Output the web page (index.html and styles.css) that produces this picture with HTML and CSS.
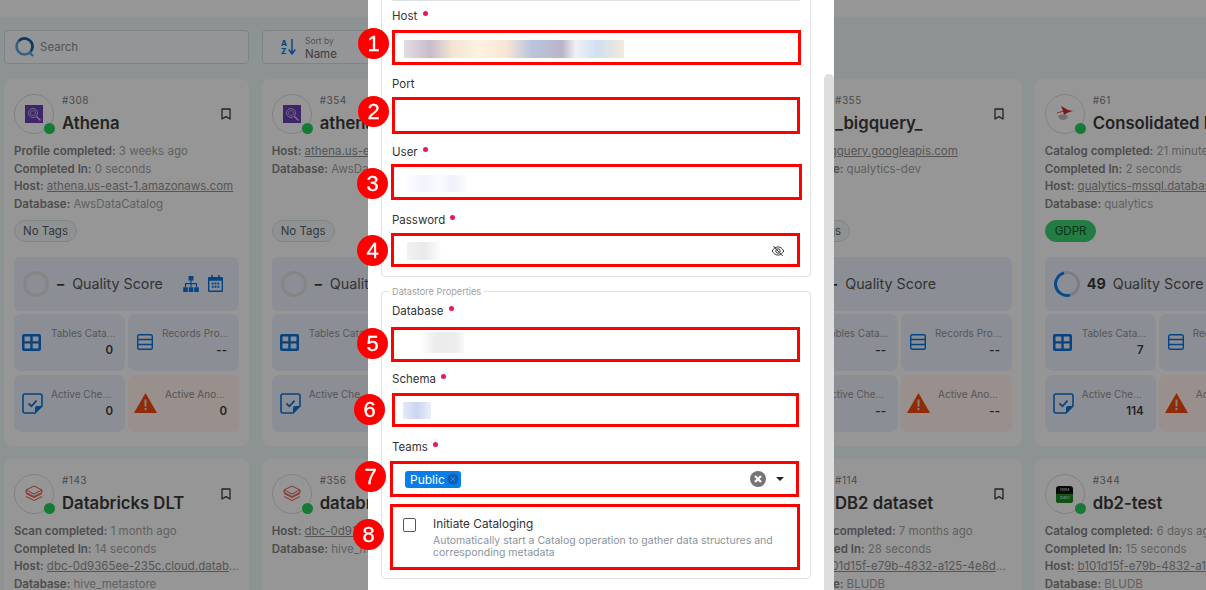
FILE: index.html
```html
<!DOCTYPE html>
<html lang="en">
<head>
    <meta charset="UTF-8">
    <meta name="viewport" content="width=device-width, initial-scale=1.0">
    <title>Add Datastore</title>
    <link rel="stylesheet" href="styles.css">
</head>
<body>
    <svg class="sprites" width="0" height="0">
        <symbol id="i-bookmark" viewBox="0 0 10 12"><path d="M1 1h8v10L5 8.6 1 11z" fill="none" stroke="currentColor" stroke-width="1.3" stroke-linejoin="round"/></symbol>
        <symbol id="i-tree" viewBox="0 0 16 16"><path d="M5.500 0h5v4.500h-5zM.2 11.200h4.600V16H.2zM5.700 11.200h4.600V16H5.700zM11.200 11.200h4.600V16h-4.600z" fill="currentColor"/><path d="M8 4v7M2.500 11V7.600h11V11" fill="none" stroke="currentColor" stroke-width="1.2"/></symbol>
        <symbol id="i-calendar" viewBox="0 0 16 18"><path d="M3.500 0h1.600v2h5.800V0h1.600v2H15a1 1 0 0 1 1 1v14a1 1 0 0 1-1 1H1a1 1 0 0 1-1-1V3a1 1 0 0 1 1-1h2.500zM1.500 6v10.500h13V6z" fill="currentColor" fill-rule="evenodd"/><path d="M4 8h2v2H4zM7 8h2v2H7zM10 8h2v2h-2zM4 11.500h2v2H4zM7 11.500h2v2H7zM10 11.500h2v2h-2z" fill="currentColor"/></symbol>
        <symbol id="i-table" viewBox="0 0 19 17"><path d="M2 0h15a2 2 0 0 1 2 2v13a2 2 0 0 1-2 2H2a2 2 0 0 1-2-2V2a2 2 0 0 1 2-2zm.5 2.500v4.700h5.800V2.500zm8.200 0v4.700h5.800V2.500zm-8.200 7v5h5.800v-5zm8.200 0v5h5.800v-5z" fill="currentColor" fill-rule="evenodd"/></symbol>
        <symbol id="i-rows" viewBox="0 0 16 16"><rect x=".7" y=".7" width="14.600" height="14.600" rx="1.500" fill="none" stroke="currentColor" stroke-width="1.400"/><path d="M1 5.500h14M1 10.500h14" stroke="currentColor" stroke-width="1.400"/></symbol>
        <symbol id="i-check" viewBox="0 0 21 21"><path d="M13 20H3a2 2 0 0 1-2-2V3a2 2 0 0 1 2-2h15a2 2 0 0 1 2 2v10z" fill="none" stroke="currentColor" stroke-width="1.600" stroke-linejoin="round"/><path d="M13 20v-5a2 2 0 0 1 2-2h5z" fill="currentColor"/><path d="M6.500 10.500l3 2.800 5-5.600" fill="none" stroke="currentColor" stroke-width="1.800"/></symbol>
        <symbol id="i-warn" viewBox="0 0 23 20"><path d="M11.500 0L23 20H0z" fill="currentColor"/><path d="M10.500 6.500h2v7h-2zM10.500 15h2v2.200h-2z" fill="#e6d5d0"/></symbol>
        <symbol id="i-athena" viewBox="0 0 18 18"><rect width="18" height="18" fill="#6a3fb0"/><circle cx="8" cy="8" r="4.500" fill="none" stroke="#d9cdf0" stroke-width=".8"/><circle cx="8" cy="8" r="2.500" fill="none" stroke="#d9cdf0" stroke-width=".6"/><path d="M11.500 11.500l4 4" stroke="#d9cdf0" stroke-width="1.200"/></symbol>
        <symbol id="i-bricks" viewBox="0 0 18 18"><path d="M9 1l8 4-8 4-8-4zM1 8.500l8 4 8-4M1 11.500l8 4 8-4M1 5v2.500l8 4 8-4V5" fill="none" stroke="#e2503e" stroke-width="1"/></symbol>
        <symbol id="i-sql" viewBox="0 0 18 18"><path d="M5 1l7 4 5 1-5 1.500L8 10 7 6z" fill="#d8262c"/><path d="M2 11c3-2 7-2 10 0-1 3-3 4-5 4s-4-1-5-4z" fill="#b9b9b9"/><path d="M1 8l7-2" stroke="#d8262c" stroke-width=".8"/></symbol>
    </svg>

    <div class="topbar"></div>
    <main class="page">
        <div class="toolbar">
            <div class="search">
                <svg class="search-icon" viewBox="0 0 20 20"><circle cx="9.500" cy="9.500" r="8" fill="none" stroke="#5aa0dc" stroke-width="2.600"/><path d="M3.800 3.900A8 8 0 0 1 17.500 9.500a8 8 0 0 1-1.600 4.800" fill="none" stroke="#1c5f9c" stroke-width="2.600"/><path d="M14 15l4 4" stroke="#5aa0dc" stroke-width="2.400"/></svg>
                <span>Search</span>
            </div>
            <div class="sort">
                <span class="sort-az"><b>A</b><b>Z</b></span>
                <svg class="sort-arrow" viewBox="0 0 8 16"><path d="M4 0v14M.8 10.500L4 15l3.200-4.500" fill="none" stroke="currentColor" stroke-width="1.400"/></svg>
                <span class="sort-text"><small>Sort by</small>Name</span>
            </div>
        </div>

        <div class="grid">
            <article class="card">
                <header class="card-head">
                    <div class="logo"><svg class="logo-img"><use href="#i-athena"/></svg><i class="dot"></i></div>
                    <div class="title"><span>#308</span><h2>Athena</h2></div>
                    <svg class="bookmark"><use href="#i-bookmark"/></svg>
                </header>
                <ul class="meta">
                    <li><b>Profile completed:</b> 3 weeks ago</li>
                    <li><b>Completed In:</b> 0 seconds</li>
                    <li><b>Host:</b> <u>athena.us-east-1.amazonaws.com</u></li>
                    <li><b>Database:</b> AwsDataCatalog</li>
                </ul>
                <span class="tag">No Tags</span>
                <div class="score">
                    <i class="ring"></i><b>–</b><span>Quality Score</span>
                    <svg class="score-tree"><use href="#i-tree"/></svg>
                    <svg class="score-cal"><use href="#i-calendar"/></svg>
                </div>
                <div class="stats">
                    <div class="stat"><svg class="ic-table"><use href="#i-table"/></svg><p>Tables Catalogued<b>0</b></p></div>
                    <div class="stat"><svg class="ic-rows"><use href="#i-rows"/></svg><p>Records Profiled<b>--</b></p></div>
                    <div class="stat"><svg class="ic-check"><use href="#i-check"/></svg><p>Active Checks<b>0</b></p></div>
                    <div class="stat stat-bad"><svg class="ic-warn"><use href="#i-warn"/></svg><p>Active Anomalies<b>0</b></p></div>
                </div>
            </article>

            <article class="card">
                <header class="card-head">
                    <div class="logo"><svg class="logo-img"><use href="#i-athena"/></svg><i class="dot"></i></div>
                    <div class="title"><span>#354</span><h2>athena</h2></div>
                </header>
                <ul class="meta">
                    <li><b>Host:</b> <u>athena.us-east-1.amazonaws.com</u></li>
                    <li><b>Database:</b> AwsDataCatalog</li>
                </ul>
                <span class="tag">No Tags</span>
                <div class="score"><i class="ring"></i><b>–</b><span>Quality Score</span></div>
                <div class="stats">
                    <div class="stat"><svg class="ic-table"><use href="#i-table"/></svg><p>Tables Catalogued<b>--</b></p></div>
                    <div class="stat"><svg class="ic-rows"><use href="#i-rows"/></svg><p>Records Profiled<b>--</b></p></div>
                    <div class="stat"><svg class="ic-check"><use href="#i-check"/></svg><p>Active Checks<b>--</b></p></div>
                    <div class="stat stat-bad"><svg class="ic-warn"><use href="#i-warn"/></svg><p>Active Anomalies<b>--</b></p></div>
                </div>
            </article>

            <article class="card"></article>

            <article class="card">
                <header class="card-head">
                    <div class="logo"></div>
                    <div class="title"><span>#355</span><h2>_bigquery_</h2></div>
                    <svg class="bookmark"><use href="#i-bookmark"/></svg>
                </header>
                <ul class="meta">
                    <li><b>Host:</b> <u>bigquery.googleapis.com</u></li>
                    <li><b>Database:</b> qualytics-dev</li>
                </ul>
                <span class="tag">No Tags</span>
                <div class="score"><i class="ring"></i><b>–</b><span>Quality Score</span></div>
                <div class="stats">
                    <div class="stat"><svg class="ic-table"><use href="#i-table"/></svg><p>Tables Catalogued<b>--</b></p></div>
                    <div class="stat"><svg class="ic-rows"><use href="#i-rows"/></svg><p>Records Profiled<b>--</b></p></div>
                    <div class="stat"><svg class="ic-check"><use href="#i-check"/></svg><p>Active Checks<b>--</b></p></div>
                    <div class="stat stat-bad"><svg class="ic-warn"><use href="#i-warn"/></svg><p>Active Anomalies<b>--</b></p></div>
                </div>
            </article>

            <article class="card">
                <header class="card-head">
                    <div class="logo"><svg class="logo-img"><use href="#i-sql"/></svg><i class="dot"></i></div>
                    <div class="title"><span>#61</span><h2>Consolidated Balance</h2></div>
                </header>
                <ul class="meta">
                    <li><b>Catalog completed:</b> 21 minutes ago</li>
                    <li><b>Completed In:</b> 2 seconds</li>
                    <li><b>Host:</b> <u>qualytics-mssql.database.windows.net</u></li>
                    <li><b>Database:</b> qualytics</li>
                </ul>
                <span class="tag tag-green">GDPR</span>
                <div class="score"><i class="ring ring-49"></i><b class="score-num">49</b><span>Quality Score</span></div>
                <div class="stats">
                    <div class="stat"><svg class="ic-table"><use href="#i-table"/></svg><p>Tables Catalogued<b>7</b></p></div>
                    <div class="stat"><svg class="ic-rows"><use href="#i-rows"/></svg><p>Records Profiled<b>--</b></p></div>
                    <div class="stat"><svg class="ic-check"><use href="#i-check"/></svg><p>Active Checks<b>114</b></p></div>
                    <div class="stat stat-bad"><svg class="ic-warn"><use href="#i-warn"/></svg><p>Active Anomalies<b>--</b></p></div>
                </div>
            </article>

            <article class="card">
                <header class="card-head">
                    <div class="logo"><svg class="logo-img"><use href="#i-bricks"/></svg><i class="dot"></i></div>
                    <div class="title"><span>#143</span><h2>Databricks DLT</h2></div>
                    <svg class="bookmark"><use href="#i-bookmark"/></svg>
                </header>
                <ul class="meta">
                    <li><b>Scan completed:</b> 1 month ago</li>
                    <li><b>Completed In:</b> 14 seconds</li>
                    <li class="clip"><b>Host:</b> <u>dbc-0d9365ee-235c.cloud.databricks.com</u></li>
                    <li><b>Database:</b> hive_metastore</li>
                </ul>
            </article>

            <article class="card">
                <header class="card-head">
                    <div class="logo"><svg class="logo-img"><use href="#i-bricks"/></svg><i class="dot"></i></div>
                    <div class="title"><span>#356</span><h2>databricks</h2></div>
                </header>
                <ul class="meta">
                    <li><b>Host:</b> <u>dbc-0d9365ee-235c.cloud.databricks.com</u></li>
                    <li><b>Database:</b> hive_metastore</li>
                </ul>
            </article>

            <article class="card"></article>

            <article class="card">
                <header class="card-head">
                    <div class="logo"></div>
                    <div class="title"><span>#114</span><h2>DB2 dataset</h2></div>
                    <svg class="bookmark"><use href="#i-bookmark"/></svg>
                </header>
                <ul class="meta">
                    <li><b>Catalog completed:</b> 7 months ago</li>
                    <li><b>Completed In:</b> 28 seconds</li>
                    <li class="clip"><b>Host:</b> <u>b101d15f-e79b-4832-a125-4e8d4a1b2c3d</u></li>
                    <li><b>Database:</b> BLUDB</li>
                </ul>
            </article>

            <article class="card">
                <header class="card-head">
                    <div class="logo"><div class="logo-db2"><span>IBM</span><span>DB2</span></div><i class="dot"></i></div>
                    <div class="title"><span>#344</span><h2>db2-test</h2></div>
                </header>
                <ul class="meta">
                    <li><b>Catalog completed:</b> 6 days ago</li>
                    <li><b>Completed In:</b> 15 seconds</li>
                    <li class="clip"><b>Host:</b> <u>b101d15f-e79b-4832-a125-4e8d4a1b2c3d</u></li>
                    <li><b>Database:</b> BLUDB</li>
                </ul>
            </article>
        </div>
    </main>

    <div class="scrim"></div>

    <section class="modal">
        <div class="modal-rule"></div>
        <form class="group group-connection">
            <div class="field">
                <label>Host <i class="req"></i></label>
                <div class="input"><span class="blur blur-host"></span></div>
            </div>
            <div class="field">
                <label>Port</label>
                <div class="input"></div>
            </div>
            <div class="field">
                <label>User <i class="req"></i></label>
                <div class="input"><span class="blur blur-user"></span></div>
            </div>
            <div class="field">
                <label>Password <i class="req"></i></label>
                <div class="input">
                    <span class="blur blur-pass"></span>
                    <svg class="eye" viewBox="0 0 24 24"><path d="M2 12c2.500-4.500 6-7 10-7s7.500 2.500 10 7c-2.500 4.500-6 7-10 7s-7.500-2.500-10-7z"/><circle cx="12" cy="12" r="3.800"/><path d="M4 3.500L20 20.500"/></svg>
                </div>
            </div>
        </form>

        <fieldset class="group group-props">
            <legend>Datastore Properties</legend>
            <div class="field">
                <label>Database <i class="req"></i></label>
                <div class="input"><span class="blur blur-db"></span></div>
            </div>
            <div class="field">
                <label>Schema <i class="req"></i></label>
                <div class="input"><span class="blur blur-schema"></span></div>
            </div>
            <div class="field">
                <label>Teams <i class="req"></i></label>
                <div class="input">
                    <span class="chip">Public
                        <svg viewBox="0 0 24 24"><circle cx="12" cy="12" r="11" fill="#0a5fb4"/><path d="M8 8l8 8M16 8l-8 8" stroke="#2e8fe8" stroke-width="2"/></svg>
                    </span>
                    <svg class="clear" viewBox="0 0 24 24"><circle cx="12" cy="12" r="12" fill="#757575"/><path d="M7.500 7.500l9 9M16.500 7.500l-9 9" stroke="#fff" stroke-width="3.200"/></svg>
                    <i class="caret"></i>
                </div>
            </div>
            <label class="catalog">
                <input type="checkbox">
                <span class="catalog-text">
                    <strong>Initiate Cataloging</strong>
                    <small>Automatically start a Catalog operation to gather data structures and corresponding metadata</small>
                </span>
            </label>
        </fieldset>
        <div class="scrollbar"></div>
    </section>

    <!-- red callouts drawn on top of the screenshot -->
    <div class="callouts">
        <i class="box box-1"></i><i class="box box-2"></i><i class="box box-3"></i><i class="box box-4"></i>
        <i class="box box-5"></i><i class="box box-6"></i><i class="box box-7"></i><i class="box box-8"></i>
        <b class="num num-1">1</b><b class="num num-2">2</b><b class="num num-3">3</b><b class="num num-4">4</b>
        <b class="num num-5">5</b><b class="num num-6">6</b><b class="num num-7">7</b><b class="num num-8">8</b>
    </div>
</body>
</html>
```

FILE: styles.css
```css
* {
    box-sizing: border-box;
}

body {
    margin: 0;
    height: 590px;
    overflow: hidden;
    background: #ebf3f6;
    font-family: Inter, "Noto Sans", sans-serif;
    color: #333;
}

.sprites {
    position: absolute;
}

.topbar {
    height: 17px;
    background: #fbfbfb;
}

.page {
    padding: 13px 4px 0;
}

.toolbar {
    display: flex;
    gap: 13px;
    height: 34px;
    margin-bottom: 15px;
}

.search, .sort {
    display: flex;
    align-items: center;
    width: 245px;
    background: #f5f8fa;
    border: 1px solid #d6dadd;
    border-radius: 4px;
}

.search {
    padding-left: 10px;
    gap: 5px;
    font-size: 11.5px;
    color: #8c8c8c;
}

.search-icon {
    width: 20px;
    height: 20px;
}

.sort {
    padding-left: 18px;
    color: #0a72d8;
}

.sort-az {
    display: flex;
    flex-direction: column;
    font-size: 8px;
    line-height: 8px;
}

.sort-arrow {
    width: 8px;
    height: 16px;
    margin: 0 9px 0 1px;
}

.sort-text {
    display: flex;
    flex-direction: column;
    font-size: 11.5px;
    line-height: 14px;
    padding-top: 2px;
    color: #666;
}

.sort-text small {
    font-size: 8.5px;
    line-height: 11px;
    color: #8c8c8c;
}

.grid {
    display: grid;
    grid-template-columns: repeat(5, 245px);
    grid-template-rows: 367px 367px;
    gap: 13px 12.7px;
}

.card {
    background: #fbfbfb;
    border-radius: 8px;
    padding: 15px 10px 0;
}

.card-head {
    display: flex;
    height: 40px;
}

.logo {
    position: relative;
    flex: none;
    display: flex;
    align-items: center;
    justify-content: center;
    width: 40px;
    height: 40px;
    border: 1px solid #d8d8d8;
    border-radius: 50%;
    margin-right: 8px;
}

.logo-img {
    width: 18px;
    height: 18px;
}

.logo-db2 {
    width: 17px;
    height: 17px;
    border-radius: 3px;
    overflow: hidden;
    display: flex;
    flex-direction: column;
    font-family: "Liberation Serif", serif;
    font-size: 5px;
    line-height: 8.5px;
    text-align: center;
    color: #ddd;
    background: #0e0e0e;
}

.logo-db2 span + span {
    background: #1e8a1e;
    color: #cfe;
}

.dot {
    position: absolute;
    right: -2px;
    bottom: -1px;
    width: 11px;
    height: 11px;
    border-radius: 50%;
    background: #26cc58;
}

.title {
    flex: 1;
    min-width: 0;
    white-space: nowrap;
    overflow: hidden;
    font-size: 10px;
    line-height: 13px;
    color: #7c7c7c;
    letter-spacing: .5px;
}

.title h2 {
    margin: 5px 0 0;
    font-size: 16.7px;
    line-height: 22px;
    font-weight: 600;
    letter-spacing: 0;
    color: #3a3a3a;
}

.bookmark {
    flex: none;
    width: 10px;
    height: 12px;
    margin: 14px 8px 0 0;
    color: #3a3a3a;
}

.meta {
    list-style: none;
    margin: 9px 0 0;
    padding: 0;
    height: 70.5px;
    font-size: 11.5px;
    line-height: 17.6px;
    color: #a0a0a0;
    white-space: nowrap;
}

.meta b {
    font-weight: 600;
    color: #808080;
}

.meta u {
    color: #8e8e8e;
}

.meta .clip {
    overflow: hidden;
    text-overflow: ellipsis;
}

.tag {
    display: inline-block;
    margin-top: 6px;
    height: 22px;
    padding: 0 8px;
    font-size: 11.5px;
    line-height: 20px;
    color: #5c5c5c;
    background: #eef3f6;
    border: 1px solid #d6dee3;
    border-radius: 11px;
}

.tag-green {
    padding: 0 9px;
    background: #3bd06f;
    border-color: #3bd06f;
    color: #124f26;
}

.score {
    display: flex;
    align-items: center;
    height: 54px;
    margin-top: 15px;
    padding-left: 9px;
    background: #e8eef8;
    border-radius: 6px;
    font-size: 14.3px;
    color: #555;
}

.score b {
    margin: 0 8px;
    color: #3a3a3a;
}

.score .score-num {
    margin: 0 7px;
}

.ring {
    flex: none;
    width: 26px;
    height: 26px;
    border: 3px solid #dedede;
    border-radius: 50%;
}

.ring-49 {
    border-color: #0a7ee8 #cfcfcf #cfcfcf #0a7ee8;
    transform: rotate(-60deg);
}

.score-tree {
    width: 16px;
    height: 16px;
    margin-left: 20px;
    color: #0a72d8;
}

.score-cal {
    width: 15px;
    height: 17px;
    margin-left: 9px;
    color: #0a72d8;
}

.stats {
    display: grid;
    grid-template-columns: 111px 111px;
    grid-template-rows: 57px 57px;
    gap: 4px 3px;
    margin-top: 3px;
}

.stat {
    display: flex;
    align-items: center;
    padding: 0 12px 0 8px;
    background: #e8eef8;
    border-radius: 7px;
    color: #0a72d8;
}

.stat-bad {
    background: #ffeee9;
    color: #f0470c;
}

.stat svg {
    flex: none;
}

.ic-table {
    width: 19px;
    height: 17px;
    margin-right: 10px;
}

.ic-rows {
    width: 16px;
    height: 16px;
    margin: 0 9px 0 1px;
}

.ic-check {
    width: 21px;
    height: 21px;
    margin-right: 8px;
}

.ic-warn {
    width: 23px;
    height: 20px;
    margin: 0 8px 0 -2px;
}

.stat p {
    flex: 1;
    min-width: 0;
    margin: 0 -3px 0 0;
    font-size: 10px;
    line-height: 16px;
    color: #909090;
    white-space: nowrap;
    overflow: hidden;
    text-overflow: ellipsis;
}

.stat p b {
    display: block;
    margin: 1px 3px 0 0;
    text-align: right;
    font-size: 11.5px;
    line-height: 17px;
    font-weight: 600;
    color: #3a3a3a;
}

.scrim {
    position: fixed;
    inset: 0;
    background: rgba(0, 0, 0, .4);
    backdrop-filter: blur(.7px);
}

.modal {
    position: fixed;
    top: 0;
    left: 368px;
    width: 466px;
    height: 590px;
    overflow: hidden;
    padding-left: 13px;
    background: #fff;
}

.modal-rule {
    position: absolute;
    top: 0;
    left: 24px;
    width: 408px;
    height: 1px;
    background: #dfe3e6;
}

.group {
    width: 430px;
    margin: 0;
    border: 1px solid #e2e2e2;
    border-radius: 4px;
    padding: 0 10px;
    display: flex;
    flex-direction: column;
    gap: 12px;
}

.group-connection {
    height: 297px;
    margin-top: -20px;
    padding-top: 27px;
}

.group-props {
    margin-top: 7px;
    padding-top: 5px;
    height: 295px;
    display: block;
}

.group-props .field {
    margin-bottom: 12px;
}

.group legend {
    margin-left: -3px;
    padding: 2px 3px 0;
    font-size: 9.2px;
    line-height: 12px;
    color: #a0a0a0;
}

.field label {
    display: block;
    height: 16px;
    margin-bottom: 6px;
    font-size: 11.5px;
    line-height: 16px;
    color: #333;
}

.req {
    display: inline-block;
    width: 5px;
    height: 5px;
    margin: 0 0 7px 2px;
    border-radius: 50%;
    background: #e8175d;
    vertical-align: middle;
}

.input {
    display: flex;
    align-items: center;
    height: 34px;
    padding: 0 12px;
    background: #fff;
}

.blur {
    display: block;
}

.blur-host {
    width: 220px;
    height: 18px;
    margin-top: 3px;
    background: linear-gradient(90deg, #e4dce6 0, #c8bccb 12%, #f3e4d2 22%, #fdf2e0 34%, #fbe6d4 46%, #b9c5de 58%, #bcb4c8 72%, #eef0f6 78%, #cfdff2 88%, #f4ead9 100%);
}

.blur-user {
    width: 62px;
    height: 17px;
    margin-left: 2px;
    background: linear-gradient(90deg, #fdfdff, #f1f3fd 30%, #fafbfe 55%, #eff1fc 75%, #fdfdff);
}

.blur-pass {
    width: 35px;
    height: 18px;
    margin-left: 3px;
    background: linear-gradient(90deg, #f1f1f1, #e9e9e9 50%, #fff);
}

.blur-db {
    width: 44px;
    height: 21px;
    margin-left: 16px;
    background: linear-gradient(90deg, #fff, #ececec 35%, #ececec 80%, #f9f9f9);
}

.blur-schema {
    width: 28px;
    height: 17px;
    margin-left: -1px;
    background: linear-gradient(90deg, #e4e9fa, #ccd6f2 50%, #eceffb);
}

.eye {
    width: 14px;
    height: 14px;
    margin-left: auto;
    margin-right: 3px;
    fill: none;
    stroke: #333;
    stroke-width: 1.7;
}

.chip {
    display: flex;
    align-items: center;
    gap: 2px;
    height: 17px;
    padding: 0 2px 0 5px;
    margin: 2px 0 0 1px;
    background: #0a7ee8;
    border-radius: 3px;
    font-size: 12px;
    color: #fff;
}

.chip svg {
    width: 12px;
    height: 12px;
}

.clear {
    width: 16px;
    height: 16px;
    margin: 1px -1px 0 auto;
}

.caret {
    width: 0;
    height: 0;
    margin: 1px 4px 0 11px;
    border-left: 4px solid transparent;
    border-right: 4px solid transparent;
    border-top: 4px solid #222;
}

.catalog {
    display: flex;
    padding: 8px 11px 0;
    margin-top: 2px;
}

.catalog input {
    appearance: none;
    flex: none;
    width: 13px;
    height: 14px;
    margin: 3px 17px 0 0;
    border: 1.3px solid #555;
    border-radius: 2px;
    background: #fff;
}

.catalog-text {
    display: flex;
    flex-direction: column;
}

.catalog-text strong {
    font-size: 11.8px;
    line-height: 18px;
    font-weight: 400;
    color: #333;
}

.catalog-text small {
    font-size: 10.5px;
    line-height: 12px;
    margin-top: 2px;
    color: #8a949c;
}

.scrollbar {
    position: absolute;
    top: 74px;
    right: 0;
    bottom: 0;
    width: 10px;
    background: #dedede;
    border-radius: 5px 5px 0 0;
}

.callouts {
    position: fixed;
    inset: 0;
}

.box {
    position: absolute;
    border: 3px solid #f00;
}

.box-1 { left: 392px; top: 30px; width: 409px; height: 35px; }
.box-2 { left: 392px; top: 97px; width: 408px; height: 37px; }
.box-3 { left: 391px; top: 164px; width: 411px; height: 36px; }
.box-4 { left: 391px; top: 233px; width: 409px; height: 34px; }
.box-5 { left: 391px; top: 327px; width: 409px; height: 35px; }
.box-6 { left: 392px; top: 393px; width: 407px; height: 34px; }
.box-7 { left: 390px; top: 461px; width: 409px; height: 36px; }
.box-8 { left: 390px; top: 504px; width: 410px; height: 66px; }

.num {
    position: absolute;
    width: 31px;
    height: 31px;
    border-radius: 50%;
    background: #f00;
    font-family: "Liberation Sans", Arial, sans-serif;
    font-size: 22px;
    font-weight: 400;
    -webkit-text-stroke: .3px #fff;
    line-height: 31px;
    text-align: center;
    color: #fff;
}

.num-1 { left: 358px; top: 28px; }
.num-2 { left: 358px; top: 96px; }
.num-3 { left: 357px; top: 168px; }
.num-4 { left: 357px; top: 235px; }
.num-5 { left: 357px; top: 328px; }
.num-6 { left: 354px; top: 394px; }
.num-7 { left: 355px; top: 461px; }
.num-8 { left: 353px; top: 519px; }
```
